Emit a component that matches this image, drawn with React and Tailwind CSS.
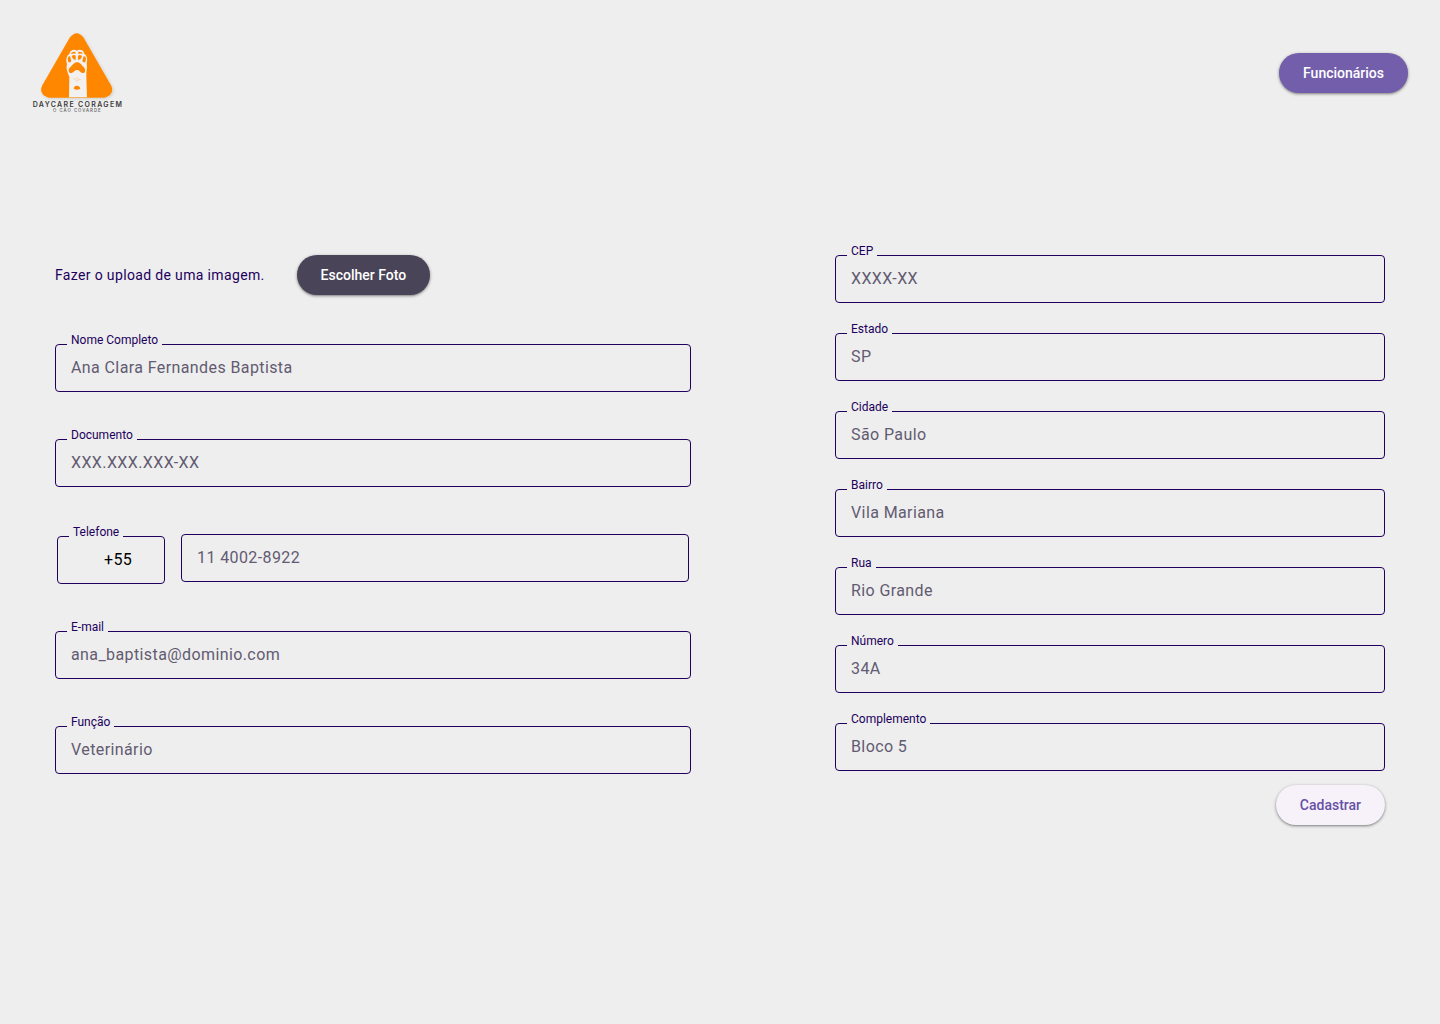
import { useId } from "react";

function Logo() {
  return (
    <svg viewBox="0 0 276 246" className="h-[82px] w-23 shrink-0" role="img" aria-label="Daycare Coragem, o cão covarde">
      <defs>
        <filter id="logo-shadow" x="-20%" y="-20%" width="140%" height="140%">
          <feDropShadow dx="3" dy="3" stdDeviation="4" floodColor="#000000" floodOpacity="0.14" />
        </filter>
      </defs>
      <path
        d="M113 17 Q134 -10 155 17 L237 160 Q250 187 218 197 H50 Q18 187 31 160 Z"
        fill="#ff8700"
        filter="url(#logo-shadow)"
      />
      {/* paw and forearm */}
      <path
        d="M112 66 C114 54 126 50 135 56 C144 50 156 55 157 66 C166 72 167 84 164 94 C167 106 162 120 163 134 L165 196 H111 L112 134 C108 124 101 112 105 96 C101 84 103 72 112 66 Z"
        fill="#f3f1ef"
      />
      {/* toes */}
      <g fill="#ff8700">
        <path d="M117 66 Q118 58 130 59 L131 65 Q123 64 117 66 Z" />
        <path d="M139 59 Q151 58 152 66 Q146 63 139 66 Z" />
        <path d="M119 72 Q126 67 131 71 V83 Q122 84 119 72 Z" />
        <path d="M138 71 Q144 67 150 72 Q148 84 138 83 Z" />
        <path d="M107 80 Q109 71 114 73 L118 87 Q114 94 109 90 Z" />
        <path d="M162 80 Q160 71 155 73 L151 87 Q155 94 160 90 Z" />
      </g>
      {/* main pad */}
      <path
        d="M135 91 C126 91 123 99 115 105 C107 112 109 125 119 123 C126 121 128 114 135 114 C142 114 144 121 151 123 C161 125 162 112 155 105 C147 99 145 91 135 91 Z"
        fill="#ff8700"
      />
      <path d="M124 139 l6 3 6 -5 3 6 8 0 M131 147 l9 -2" fill="none" stroke="#ffc68a" strokeWidth="2" />
      <path d="M125 170 C125 158 144 158 145 170 Q135 176 125 170 Z" fill="#ff8700" />
      <text
        x="138"
        y="224"
        textAnchor="middle"
        className="fill-[#3c3c3c] font-['Inter',sans-serif] text-[21px] font-semibold tracking-[4px]"
      >
        DAYCARE CORAGEM
      </text>
      <text
        x="136"
        y="241"
        textAnchor="middle"
        className="fill-[#5c5c5c] font-['Inter',sans-serif] text-[13px] font-medium tracking-[3px]"
      >
        O CÃO COVARDE
      </text>
    </svg>
  );
}

const pill =
  "h-10 rounded-full px-6 text-sm font-medium shadow-[0_1px_3px_1px_rgba(0,0,0,0.15),0_1px_2px_rgba(0,0,0,0.3)]";

const box =
  "block h-12 w-full rounded border border-[#21005d] bg-transparent pb-0.5 text-base tracking-wide outline-none placeholder:text-[#625b71]";

function Field({ label, placeholder, type = "text" }) {
  const id = useId();
  return (
    <div className="relative">
      <label htmlFor={id} className="absolute -top-3 left-3 bg-[#eeeeee] px-1 text-xs text-[#21005d]">
        {label}
      </label>
      <input id={id} type={type} placeholder={placeholder} className={`${box} px-[15px]`} />
    </div>
  );
}

function PhoneField() {
  const id = useId();
  return (
    <div className="flex items-start gap-4 px-0.5">
      <div className="relative mt-0.5 w-27 shrink-0">
        <label htmlFor={id} className="absolute -top-3 left-3 bg-[#eeeeee] px-1 text-xs text-[#21005d]">
          Telefone
        </label>
        <input id={id} type="tel" defaultValue="+55" className={`${box} pl-[46px] text-black`} />
      </div>
      <input type="tel" aria-label="Número de telefone" placeholder="11 4002-8922" className={`${box} px-[15px]`} />
    </div>
  );
}

const address = [
  ["CEP", "XXXX-XX"],
  ["Estado", "SP"],
  ["Cidade", "São Paulo"],
  ["Bairro", "Vila Mariana"],
  ["Rua", "Rio Grande"],
  ["Número", "34A"],
  ["Complemento", "Bloco 5"],
];

export default function App() {
  return (
    <div className="min-h-screen bg-[#eeeeee] font-['Roboto',sans-serif]">
      <header className="flex items-center justify-between px-8 pt-8">
        <Logo />
        <button type="button" className={`${pill} bg-[#735eab] text-white`}>
          Funcionários
        </button>
      </header>

      <form className="mt-[141px] grid grid-cols-[636fr_550fr] items-start gap-36 px-[55px] pb-16">
        <div>
          <div className="flex items-center gap-8">
            <p className="text-sm tracking-wide text-[#21005d]">Fazer o upload de uma imagem.</p>
            <button type="button" className={`${pill} bg-[#4a4458] text-white`}>
              Escolher Foto
            </button>
          </div>
          <div className="mt-[49px] flex flex-col gap-[47px]">
            <Field label="Nome Completo" placeholder="Ana Clara Fernandes Baptista" />
            <Field label="Documento" placeholder="XXX.XXX.XXX-XX" />
            <PhoneField />
            <Field label="E-mail" type="email" placeholder="ana_baptista@dominio.com" />
            <Field label="Função" placeholder="Veterinário" />
          </div>
        </div>

        <div className="flex flex-col">
          <div className="flex flex-col gap-[30px]">
            {address.map(([label, placeholder]) => (
              <Field key={label} label={label} placeholder={placeholder} />
            ))}
          </div>
          <button type="submit" className={`${pill} mt-3.5 self-end bg-[#f7f2fa] text-[#6750a4]`}>
            Cadastrar
          </button>
        </div>
      </form>
    </div>
  );
}
